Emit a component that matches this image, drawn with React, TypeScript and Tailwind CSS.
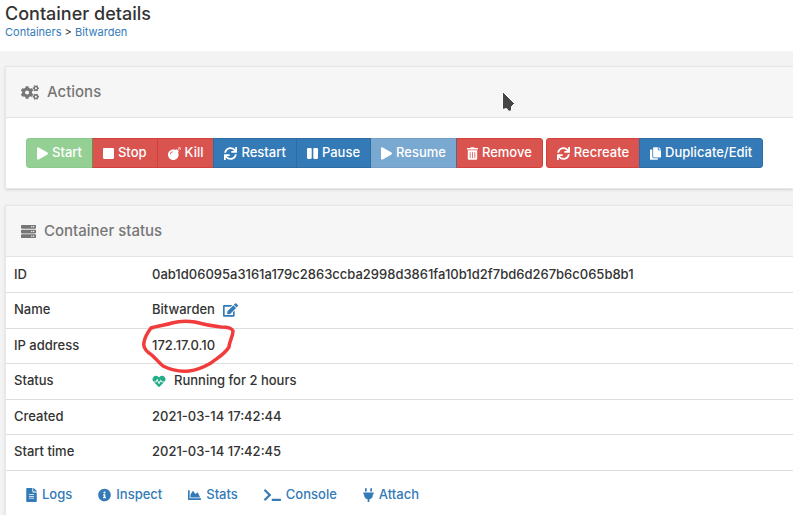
import React from 'react';
import { IconType } from 'react-icons';
import {
  FaBomb,
  FaChartArea,
  FaCogs,
  FaCopy,
  FaEdit,
  FaFileAlt,
  FaHeartbeat,
  FaInfoCircle,
  FaPause,
  FaPlay,
  FaPlug,
  FaServer,
  FaStop,
  FaSync,
  FaTerminal,
  FaTrashAlt,
} from 'react-icons/fa';

type Tone = 'success' | 'danger' | 'primary';

interface Action {
  label: string;
  icon: IconType;
  iconWidth: string;
  tone: Tone;
  disabled?: boolean;
}

const lifecycleActions: Action[] = [
  { label: 'Start', icon: FaPlay, iconWidth: 'w-[11px]', tone: 'success', disabled: true },
  { label: 'Stop', icon: FaStop, iconWidth: 'w-[11px]', tone: 'danger' },
  { label: 'Kill', icon: FaBomb, iconWidth: 'w-[13px]', tone: 'danger' },
  { label: 'Restart', icon: FaSync, iconWidth: 'w-[13px]', tone: 'primary' },
  { label: 'Pause', icon: FaPause, iconWidth: 'w-[11px]', tone: 'primary' },
  { label: 'Resume', icon: FaPlay, iconWidth: 'w-[11px]', tone: 'primary', disabled: true },
  { label: 'Remove', icon: FaTrashAlt, iconWidth: 'w-[11px]', tone: 'danger' },
];

const editActions: Action[] = [
  { label: 'Recreate', icon: FaSync, iconWidth: 'w-[13px]', tone: 'danger' },
  { label: 'Duplicate/Edit', icon: FaCopy, iconWidth: 'w-[11px]', tone: 'primary' },
];

const links: { label: string; icon: IconType; iconWidth: string }[] = [
  { label: 'Logs', icon: FaFileAlt, iconWidth: 'w-[11px]' },
  { label: 'Inspect', icon: FaInfoCircle, iconWidth: 'w-[13px]' },
  { label: 'Stats', icon: FaChartArea, iconWidth: 'w-[13px]' },
  { label: 'Console', icon: FaTerminal, iconWidth: 'w-[17px]' },
  { label: 'Attach', icon: FaPlug, iconWidth: 'w-[11px]' },
];

const getToneClass = (tone: Tone) => {
  switch (tone) {
    case 'success':
      return 'bg-[#5cb85c] border-[#4cae4c]';
    case 'danger':
      return 'bg-[#d9534f] border-[#d43f3a]';
    default:
      return 'bg-[#337ab7] border-[#2e6da4]';
  }
};

const ButtonGroup: React.FC<{ actions: Action[] }> = ({ actions }) => (
  <div className="flex">
    {actions.map(({ label, icon: Icon, iconWidth, tone, disabled }) => (
      <button
        key={label}
        type="button"
        disabled={disabled}
        className={`-ml-px first:ml-0 flex h-[30px] items-center gap-1 whitespace-nowrap border px-2.5 text-white first:rounded-l-[3px] last:rounded-r-[3px] disabled:opacity-65 ${getToneClass(tone)}`}
      >
        <Icon className={`h-[13px] ${iconWidth}`} />
        {label}
      </button>
    ))}
  </div>
);

const Widget: React.FC<{ title: string; icon: React.ReactNode; children: React.ReactNode }> = ({
  title,
  icon,
  children,
}) => (
  <section className="ml-[5px] border-y border-l border-[#e7e7e7] bg-white shadow-sm">
    <h2 className="flex h-[51px] items-center gap-2 border-b border-[#e3e3e3] bg-[#f6f6f6] px-[15px] text-[15px] text-[#767676]">
      {icon}
      {title}
    </h2>
    {children}
  </section>
);

const Row: React.FC<{ label: string; children: React.ReactNode }> = ({ label, children }) => (
  <tr className="border-b border-[#dddddd] odd:h-[35px] even:h-9">
    <th scope="row" className="w-[138px] px-2 text-left font-medium">
      {label}
    </th>
    <td className="px-2">{children}</td>
  </tr>
);

const App: React.FC = () => {
  return (
    <div className="min-h-screen overflow-hidden bg-[#f3f3f3] font-['Inter',sans-serif] text-[13px] font-medium text-[#333333]">
      <header className="h-[51px] bg-white px-[5px] pt-1">
        <h1 className="text-[18px] leading-5">Container details</h1>
        <nav className="text-[11px] font-normal leading-4">
          <a href="#containers" className="text-[#337ab7]">Containers</a>
          {' > '}
          <a href="#bitwarden" className="text-[#337ab7]">Bitwarden</a>
        </nav>
      </header>

      <main className="relative flex flex-col gap-4 pt-[15px]">
        <Widget title="Actions" icon={<FaCogs className="h-[15px] w-[18px]" />}>
          <div className="flex gap-[3px] px-5 py-5">
            <ButtonGroup actions={lifecycleActions} />
            <ButtonGroup actions={editActions} />
          </div>
        </Widget>

        <Widget title="Container status" icon={<FaServer className="h-[15px] w-[15px]" />}>
          <table className="w-full border-collapse">
            <tbody>
              <Row label="ID">0ab1d06095a3161a179c2863ccba2998d3861fa10b1d2f7bd6d267b6c065b8b1</Row>
              <Row label="Name">
                <span className="flex items-center gap-2">
                  Bitwarden
                  <a href="#rename" aria-label="Rename" className="text-[#337ab7]">
                    <FaEdit className="h-3.5 w-[15px]" />
                  </a>
                </span>
              </Row>
              <Row label="IP address">
                <span className="relative">
                  172.17.0.10
                  {/* hand drawn marker around the address */}
                  <svg
                    className="pointer-events-none absolute -left-3 -top-5 h-[60px] w-[100px]"
                    viewBox="0 0 100 60"
                    fill="none"
                    stroke="#f23c3c"
                    strokeWidth="3.5"
                    strokeLinecap="round"
                    strokeLinejoin="round"
                  >
                    <path d="M11 11C17 9 26 8 32 6C39 4 48 4 55 5C62 7 72 9 81 10C86 10 92 11 93 14C93 20 89 25 89 30C84 38 77 41 71 46C64 50 58 53 49 54C40 55 31 53 23 49C18 45 14 39 9 36C5 33 3 29 4 25C5 19 8 15 11 11Z" />
                  </svg>
                </span>
              </Row>
              <Row label="Status">
                <span className="flex items-center gap-2">
                  <FaHeartbeat className="h-[13px] w-3.5 text-[#23ae89]" />
                  Running for 2 hours
                </span>
              </Row>
              <Row label="Created">2021-03-14 17:42:44</Row>
              <Row label="Start time">2021-03-14 17:42:45</Row>
            </tbody>
          </table>
          <div className="flex h-12 items-center gap-[26px] px-5">
            {links.map(({ label, icon: Icon, iconWidth }) => (
              <a key={label} href={`#${label.toLowerCase()}`} className="flex items-center gap-[5px] text-[#337ab7]">
                <Icon className={`h-3.5 ${iconWidth}`} />
                {label}
              </a>
            ))}
          </div>
        </Widget>

        {/* mouse pointer */}
        <svg className="pointer-events-none absolute left-[500px] top-[39px] h-6 w-4" viewBox="0 0 16 24">
          <path
            d="M2.500 1.500V19.500L6.500 18.500L9 21.500L11.500 20.500V16.500L14.500 13.500Z"
            fill="#454545"
            stroke="#ffffff"
            strokeWidth="1"
          />
        </svg>
      </main>
    </div>
  );
};

export default App;
